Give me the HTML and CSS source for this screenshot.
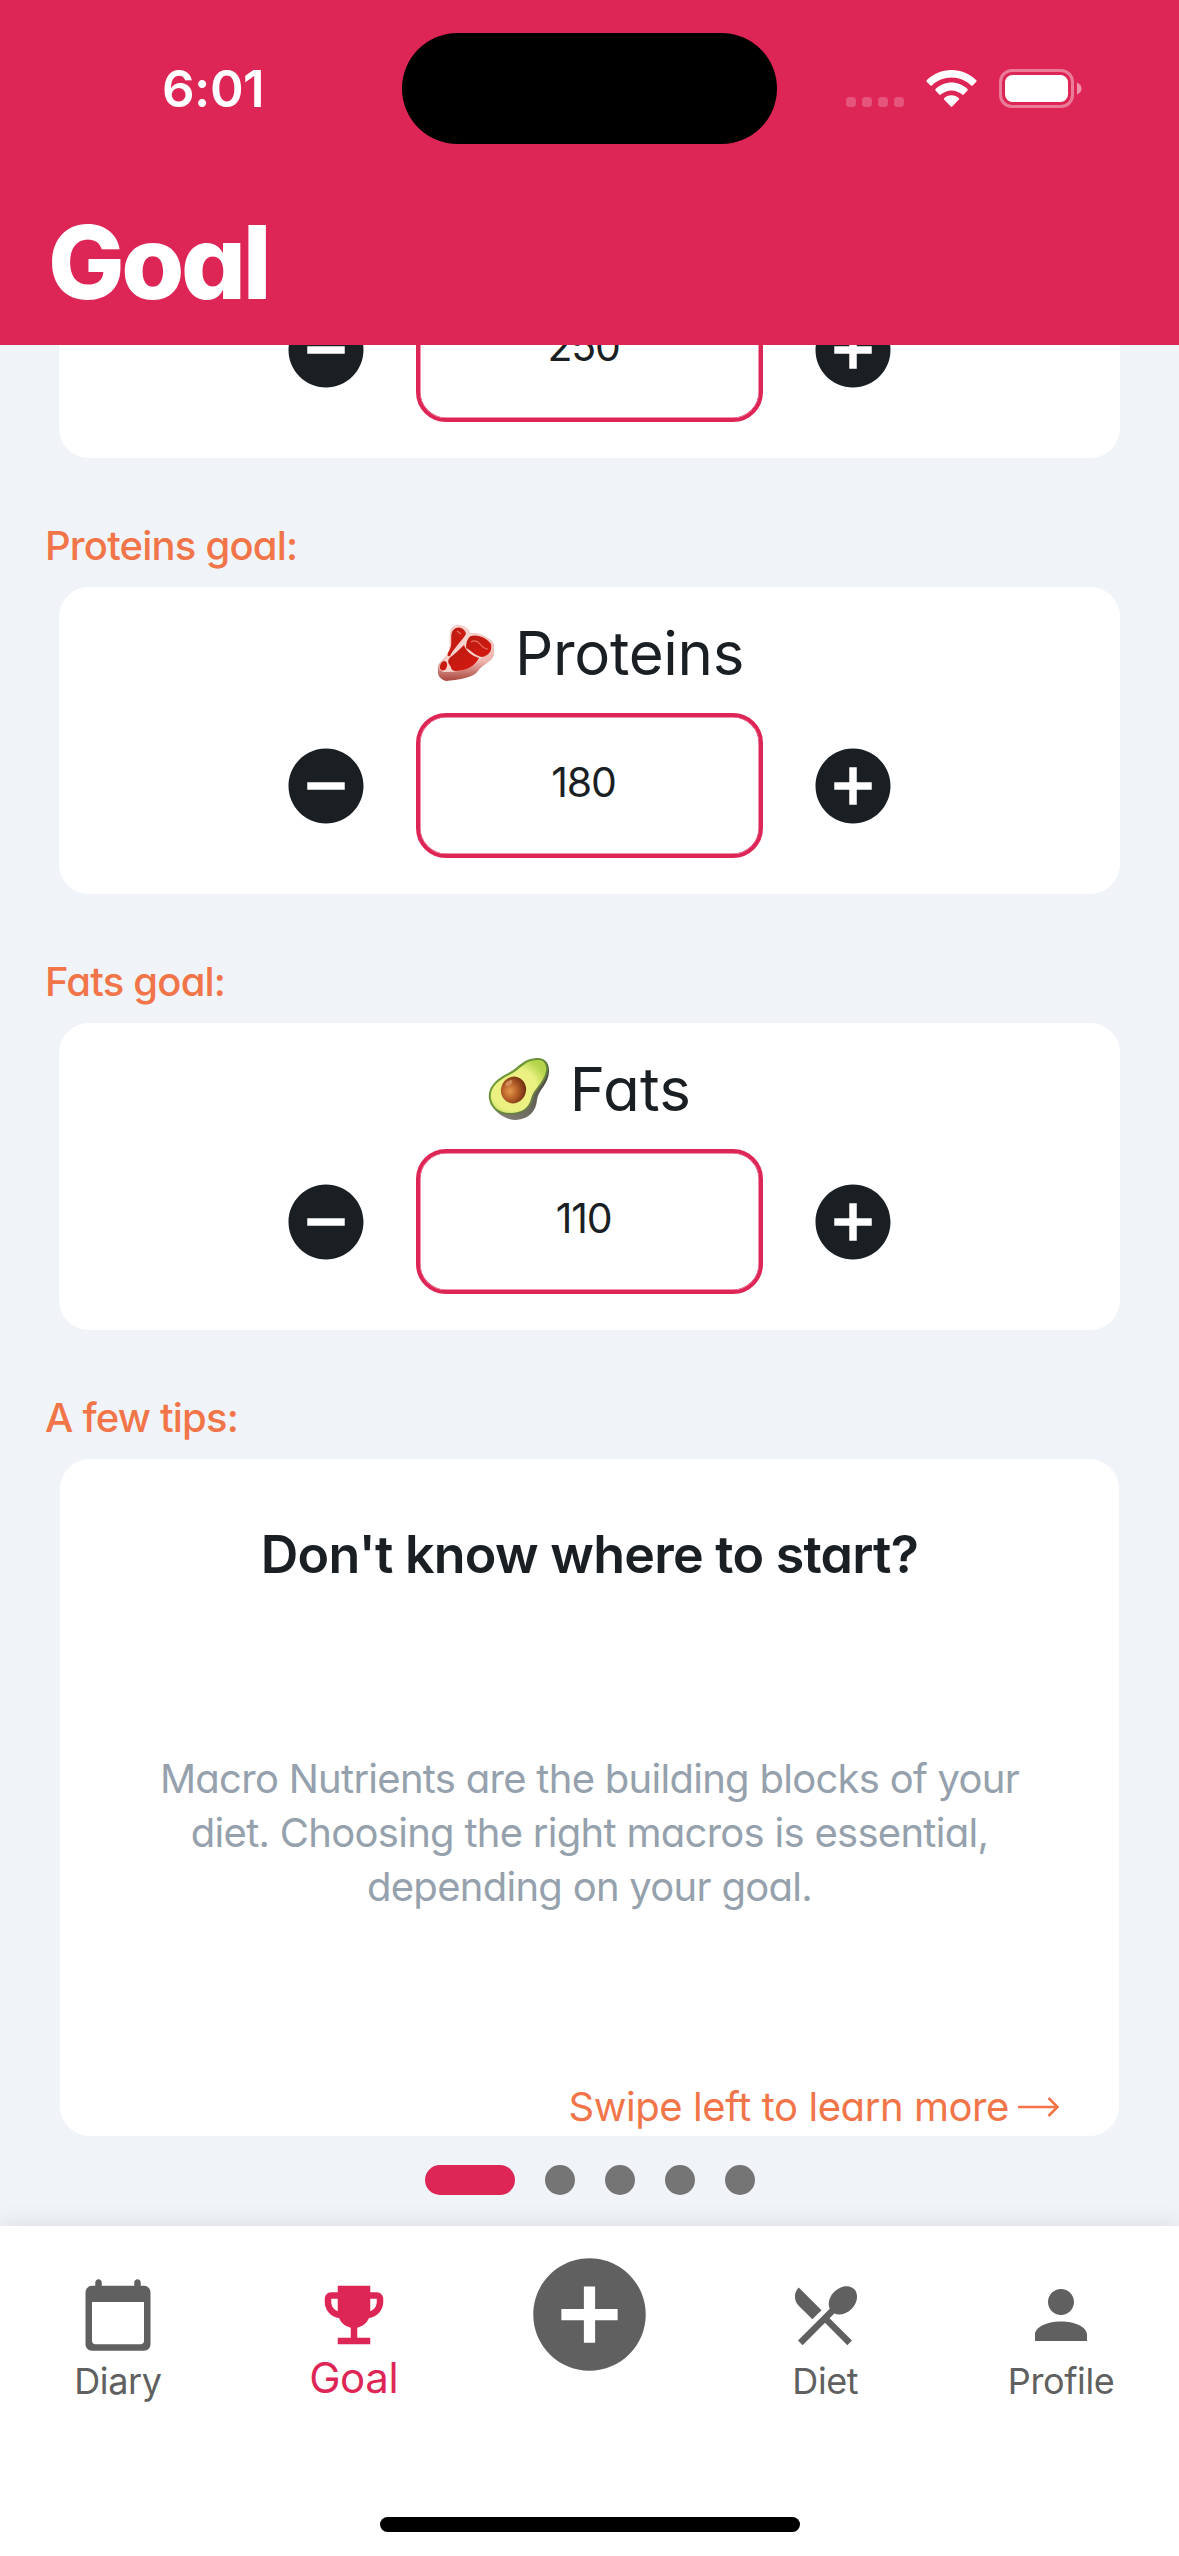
FILE: index.html
```html
<!DOCTYPE html>
<html lang="en">
<head>
<meta charset="utf-8">
<title>Goal</title>
<link rel="stylesheet" href="styles.css">
</head>
<body>
<svg class="defs" width="0" height="0" aria-hidden="true">
  <symbol id="minus" viewBox="0 0 24 24"><path d="M12 2C6.48 2 2 6.48 2 12s4.48 10 10 10 10-4.48 10-10S17.52 2 12 2zm5 11H7v-2h10v2z"/></symbol>
  <symbol id="plus" viewBox="0 0 24 24"><path d="M12 2C6.48 2 2 6.48 2 12s4.48 10 10 10 10-4.48 10-10S17.52 2 12 2zm5 11h-4v4h-2v-4H7v-2h4V7h2v4h4v2z"/></symbol>
</svg>

<header class="header">
  <div class="status">
    <span class="time">6:01</span>
    <span class="island"></span>
    <span class="indicators">
      <svg width="240" height="48" viewBox="0 0 240 48">
        <g fill="#fff" fill-opacity=".22"><rect x="0" y="32" width="10" height="10" rx="3.5"/><rect x="16" y="32" width="10" height="10" rx="3.5"/><rect x="32" y="32" width="10" height="10" rx="3.5"/><rect x="48" y="32" width="10" height="10" rx="3.5"/></g>
        <g fill="#fff">
          <path d="M105.500 5C115 5 124 8.700 130.300 15.300Q131 16 130.300 16.700L126.500 20.400Q125.800 21 125.100 20.400C119.800 15.400 113 12.600 105.500 12.600S91.200 15.400 85.900 20.400Q85.200 21 84.500 20.400L80.700 16.700Q80 16 80.700 15.300C87 8.700 96 5 105.500 5z"/>
          <path d="M105.500 17.600C111.500 17.600 117.200 20 121.500 24.100Q122.200 24.800 121.500 25.500L117.700 29.600Q117 30.200 116.300 29.600C113.300 27 109.500 25.400 105.500 25.400S97.700 27 94.700 29.600Q94 30.200 93.300 29.600L89.500 25.500Q88.800 24.800 89.500 24.100C93.800 20 99.500 17.600 105.500 17.600z"/>
          <path d="M105.500 30.300C108.300 30.300 111 31.300 112.900 33.200Q113.500 33.900 112.900 34.600L106.200 41.500Q105.500 42.300 104.800 41.500L98.100 34.600Q97.500 33.900 98.100 33.200C100 31.300 102.700 30.300 105.500 30.300z"/>
        </g>
        <rect x="154.500" y="5.500" width="72" height="36" rx="11.500" fill="none" stroke="#fff" stroke-opacity=".4" stroke-width="3"/>
        <rect x="159" y="10" width="63" height="27" rx="7.500" fill="#fff"/>
        <path d="M231 17.500C237 20 237 27 231 29.500z" fill="#fff" fill-opacity=".5"/>
      </svg>
    </span>
  </div>
  <h1 class="title">Goal</h1>
</header>

<main class="content">
  <section class="card macro macro-scrolled">
    <div class="stepper">
      <svg class="step"><use href="#minus"/></svg>
      <div class="value">250</div>
      <svg class="step"><use href="#plus"/></svg>
    </div>
  </section>

  <h2 class="label">Proteins goal:</h2>
  <section class="card macro">
    <h3 class="name">
      <svg class="food" viewBox="0 0 62 64">
        <defs>
          <linearGradient id="fat" x1="0" y1="0" x2="0" y2="1"><stop offset="0" stop-color="#f6cfca"/><stop offset=".65" stop-color="#eeb5ae"/><stop offset="1" stop-color="#a8453c"/></linearGradient>
          <linearGradient id="meat" x1="0" y1="0" x2="1" y2="1"><stop offset="0" stop-color="#b81c12"/><stop offset="1" stop-color="#d8180f"/></linearGradient>
        </defs>
        <path fill="url(#fat)" d="M22 4C27 3 35 8 35 12L42 12C50 14 60 20 59 25V34C57 41 48 43 43 50C38 57 22 59 11 60C5 58 2 54 3 49C2 42 7 40 12 34C16 29 14 20 15 12C15 7 18 5 22 4z"/>
        <path fill="#f8d3cd" d="M22 5C28 4 33 8 34 13L42 13C50 15 57 20 58 26C58 31 48 35 41 42C33 50 21 51 9 51C3 49 3 45 8 40C18 31 14 22 16 12C17 7 19 6 22 5z"/>
        <path fill="url(#meat)" d="M21 7C25 5 31 9 31 13C26 21 19 27 15 35C12 36 12 33 14 30C18 24 15 17 17 11C18 9 19 8 21 7z"/>
        <path fill="url(#meat)" d="M35 15.500C42 12.500 52 17 56 23C58 30 53 35 47 36C40 35 37 30 31 27C31 22 32 18 35 15.500z"/>
        <path fill="url(#meat)" d="M29 24C31 30 37 35 44 37C41 43 35 48 26 49.500C20 50.500 16 50 16 46C13 42 12 40 15 36.500C20 33 24 29 29 24z"/>
        <path fill="url(#meat)" d="M9 40C13 40 13 46 10 49C5 51 3 46 7 41z"/>
        <path fill="none" stroke="#e77268" stroke-width="1.200" d="M36 21q5-3 9 2t8 5M22 10l4 3"/>
      </svg>
      <span>Proteins</span>
    </h3>
    <div class="stepper">
      <svg class="step"><use href="#minus"/></svg>
      <div class="value">180</div>
      <svg class="step"><use href="#plus"/></svg>
    </div>
  </section>

  <h2 class="label">Fats goal:</h2>
  <section class="card macro">
    <h3 class="name name-fats">
      <svg class="food" viewBox="0 0 62 64">
        <defs>
          <linearGradient id="skin" x1="0" y1="0" x2="1" y2="1"><stop offset="0" stop-color="#78a832"/><stop offset=".55" stop-color="#65893a"/><stop offset="1" stop-color="#6c655e"/></linearGradient>
          <linearGradient id="shade" x1="0" y1="1" x2="1" y2="0"><stop offset="0" stop-color="#8b877f"/><stop offset="1" stop-color="#3f3d31"/></linearGradient>
          <radialGradient id="flesh" cx=".42" cy=".55" r=".62"><stop offset="0" stop-color="#f0ee83"/><stop offset=".65" stop-color="#eaf181"/><stop offset="1" stop-color="#b5d44b"/></radialGradient>
          <radialGradient id="pit" cx=".38" cy=".58" r=".65"><stop offset="0" stop-color="#e59a4c"/><stop offset=".45" stop-color="#b9622a"/><stop offset="1" stop-color="#6a2b10"/></radialGradient>
        </defs>
        <path fill="url(#shade)" d="M2 44C6 56 18 63 28 63C41 62 48 54 49 43C50 33 61 27 61 14C61 8 59 3 53 2z"/>
        <path fill="url(#skin)" d="M1 42C-1 29 10 21 22 15C31 10 36 1 49 1C57 0 61 7 60 14C58 27 47 32 45 43C43 53 34 58 23 58C11 58 3 52 1 42z"/>
        <path fill="url(#flesh)" d="M3 42C1 30 11 23 23 17C33 12 37 3 49 3C56 2 59 8 58 14C56 26 45 32 43 42C41 51 33 56 23 56C12 56 5 51 3 42z"/>
        <ellipse cx="25.500" cy="33" rx="12.500" ry="13.500" transform="rotate(18 25.500 33)" fill="url(#pit)"/>
        <ellipse cx="21" cy="26" rx="4" ry="2" transform="rotate(-35 21 26)" fill="#e0a071" opacity=".7"/>
      </svg>
      <span>Fats</span>
    </h3>
    <div class="stepper">
      <svg class="step"><use href="#minus"/></svg>
      <div class="value">110</div>
      <svg class="step"><use href="#plus"/></svg>
    </div>
  </section>

  <h2 class="label">A few tips:</h2>
  <section class="card tips">
    <h3 class="tips-title">Don't know where to start?</h3>
    <p class="tips-text">Macro Nutrients are the building blocks of your<br>diet. Choosing the right macros is essential,<br>depending on your goal.</p>
    <p class="swipe"><span>Swipe left to learn more</span>
      <svg class="arrow" viewBox="0 0 42 20"><path d="M0 10H39.500M30.500 1L39.500 10L30.500 19"/></svg>
    </p>
  </section>
  <div class="dots"><i class="active"></i><i></i><i></i><i></i><i></i></div>
</main>

<nav class="nav">
  <div class="tabs">
    <a class="tab"><svg class="icon" viewBox="0 0 24 24"><path d="M20 3h-1V2c0-.55-.45-1-1-1s-1 .45-1 1v1H7V2c0-.55-.45-1-1-1s-1 .45-1 1v1H4c-1.100 0-2 .9-2 2v16c0 1.100.9 2 2 2h16c1.100 0 2-.9 2-2V5c0-1.100-.9-2-2-2zm-1 18H5c-.55 0-1-.45-1-1V8h16v12c0 .55-.45 1-1 1z"/></svg><span>Diary</span></a>
    <a class="tab selected"><svg class="icon" viewBox="0 0 24 24"><path d="M19 5h-2V3H7v2H5c-1.100 0-2 .9-2 2v1c0 2.550 1.920 4.630 4.390 4.940.63 1.500 1.980 2.630 3.610 2.960V19H7v2h10v-2h-4v-3.100c1.630-.33 2.980-1.460 3.610-2.960C19.080 12.630 21 10.550 21 8V7c0-1.100-.9-2-2-2zM5 8V7h2v3.820C5.840 10.400 5 9.300 5 8zm14 0c0 1.300-.84 2.400-2 2.820V7h2v1z"/></svg><span>Goal</span></a>
    <a class="tab add"><svg viewBox="0 0 24 24"><use href="#plus"/></svg></a>
    <a class="tab"><svg class="icon" viewBox="0 0 24 24"><path d="M8.100 13.340l2.830-2.830L3.910 3.500c-1.560 1.560-1.560 4.090 0 5.660l4.190 4.180zm6.780-1.810c1.530.71 3.680.21 5.270-1.380 1.910-1.910 2.280-4.650.81-6.120-1.460-1.460-4.200-1.100-6.120.81-1.590 1.590-2.090 3.740-1.380 5.270L3.700 19.870l1.410 1.410L12 14.410l6.880 6.880 1.410-1.410L13.410 13l1.470-1.470z"/></svg><span>Diet</span></a>
    <a class="tab"><svg class="icon" viewBox="0 0 24 24"><path d="M12 12c2.210 0 4-1.790 4-4s-1.790-4-4-4-4 1.790-4 4 1.790 4 4 4zm0 2c-4.420 0-8 1.790-8 4v2h16v-2c0-2.210-3.580-4-8-4z"/></svg><span>Profile</span></a>
  </div>
  <div class="home-bar"></div>
</nav>
</body>
</html>
```
FILE: styles.css
```css
* {
  box-sizing: border-box;
  margin: 0;
  padding: 0;
}

body {
  display: flex;
  flex-direction: column;
  width: 1179px;
  height: 2556px;
  overflow: hidden;
  background: #f0f4f9;
  color: #1a1f24;
  font-family: Inter, "Liberation Sans", sans-serif;
  font-feature-settings: "cv11";
}

.defs {
  display: none;
}

svg {
  display: block;
  flex: none;
  fill: currentColor;
}

/* Header */

.header {
  flex: none;
  height: 345px;
  background: #de2656;
  color: #fff;
}

.status {
  display: grid;
  grid-template-columns: 402px 375px 402px;
  align-items: center;
  height: 177px;
}

.time {
  padding-left: 162px;
  font-size: 51px;
  font-weight: 600;
  line-height: 60px;
  letter-spacing: -0.5px;
  font-feature-settings: normal;
}

.island {
  height: 111px;
  border-radius: 56px;
  background: #000;
}

.indicators {
  padding-left: 69px;
}

.title {
  margin-top: 25px;
  padding-left: 48px;
  font-size: 102px;
  font-weight: 800;
  line-height: 120px;
  letter-spacing: -3.4px;
}

/* Scrolling content */

.content {
  flex: 1;
  min-height: 0;
  overflow: hidden;
}

.card {
  border-radius: 30px;
  background: #fff;
}

.macro {
  display: flex;
  flex-direction: column;
  justify-content: space-between;
  height: 307px;
  margin: 0 59px;
  padding: 28px 0 36px;
}

.macro-scrolled {
  justify-content: flex-end;
  margin-top: -194px;
}

.label {
  margin: 61px 0 14px 45px;
  color: #f17549;
  font-size: 40px;
  font-weight: 500;
  line-height: 54px;
  letter-spacing: -0.8px;
}

.name {
  display: flex;
  justify-content: center;
  gap: 18px;
  font-size: 60px;
  font-weight: 400;
  line-height: 76px;
  letter-spacing: -0.3px;
}

.name-fats {
  gap: 20px;
  letter-spacing: 0.3px;
}

.food {
  width: 62px;
  height: 64px;
  margin-top: 6px;
}

.stepper {
  display: flex;
  align-items: center;
  justify-content: center;
  gap: 45px;
  height: 145px;
}

.step {
  width: 90px;
  height: 90px;
}

.value {
  width: 347px;
  height: 145px;
  padding: 0 12px 5px 0;
  border: 4px solid #de2656;
  border-radius: 30px;
  box-shadow: inset 0 0 0 0.5px #de2656;
  font-size: 41px;
  line-height: 131px;
  letter-spacing: -1.2px;
  text-align: center;
}

.tips {
  display: flex;
  flex-direction: column;
  height: 677px;
  margin: 0 60px;
  padding: 61px 59px 2px;
  text-align: center;
}

.tips-title {
  font-size: 52px;
  font-weight: 600;
  line-height: 70px;
  letter-spacing: -0.75px;
}

.tips-text {
  margin-top: 162px;
  color: #95a1ac;
  font-size: 40px;
  line-height: 54px;
  letter-spacing: -0.72px;
}

.swipe {
  display: flex;
  align-items: center;
  justify-content: flex-end;
  gap: 9px;
  margin-top: auto;
  color: #f17549;
  font-size: 40px;
  line-height: 54px;
  letter-spacing: -0.42px;
}

.arrow {
  width: 42px;
  height: 20px;
  fill: none;
  stroke: currentColor;
  stroke-width: 2.6;
}

.dots {
  display: flex;
  justify-content: center;
  gap: 30px;
  margin-top: 29px;
}

.dots i {
  width: 30px;
  height: 30px;
  border-radius: 15px;
  background: #757575;
}

.dots .active {
  width: 90px;
  background: #de2656;
}

/* Bottom navigation */

.nav {
  display: flex;
  flex: none;
  flex-direction: column;
  justify-content: space-between;
  height: 330px;
  padding-bottom: 24px;
  background: #fff;
  box-shadow: 0 0 24px rgba(0, 0, 0, 0.1);
  color: #606060;
  font-feature-settings: normal;
}

.tabs {
  display: grid;
  grid-template-columns: repeat(5, 1fr);
}

.tab {
  display: flex;
  flex-direction: column;
  align-items: center;
  padding-top: 50px;
  font-size: 36px;
  line-height: 44px;
  letter-spacing: -0.4px;
}

.icon {
  width: 78px;
  height: 78px;
  margin-bottom: 5px;
}

.selected {
  color: #de2656;
  font-size: 42px;
  line-height: 50px;
}

.selected .icon {
  margin-bottom: -1px;
}

.add {
  padding-top: 21px;
}

.add svg {
  width: 135px;
  height: 135px;
}

.home-bar {
  align-self: center;
  width: 420px;
  height: 15px;
  border-radius: 8px;
  background: #000;
}
```
